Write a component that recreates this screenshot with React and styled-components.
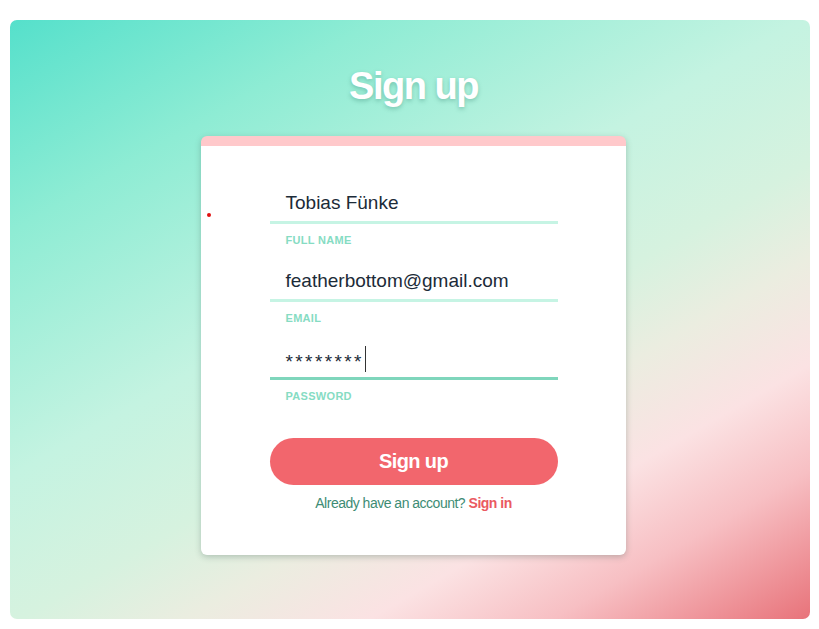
import React from 'react';
import styled, { createGlobalStyle } from 'styled-components';

const GlobalStyle = createGlobalStyle`
  html, body {
    margin: 0;
    padding: 0;
    background: #ffffff;
  }
  body {
    font-family: "Liberation Sans", Arial, sans-serif;
  }
`;

const Page = styled.div`
  padding: 20px 9px 10px 10px;
  height: 629px;
  box-sizing: border-box;
`;

const Backdrop = styled.div`
  position: relative;
  height: 100%;
  border-radius: 7px;
  box-sizing: border-box;
  padding: 43px 0 0 7px;
  display: flex;
  flex-direction: column;
  align-items: center;
  background: linear-gradient(
    150deg,
    #55e0cb 0%,
    #8eecd4 20%,
    #c4f3e1 43%,
    #d6f2df 57%,
    #ebede0 66%,
    #fbe2e3 76%,
    #f7bfc3 86%,
    #e8737a 100%
  );
`;

const Title = styled.h1`
  margin: 0;
  font-family: "Liberation Sans", Arial, sans-serif;
  font-size: 38px;
  font-weight: 700;
  letter-spacing: -1.5px;
  line-height: 46px;
  color: #ffffff;
  text-shadow: 0 2px 4px rgba(40, 120, 100, 0.35);
`;

const Card = styled.div`
  margin-top: 27px;
  width: 425px;
  height: 419px;
  box-sizing: border-box;
  background: #ffffff;
  border-radius: 6px;
  border-top: 10px solid #ffc9cb;
  box-shadow: 0 2px 6px rgba(60, 90, 80, 0.3);
  display: flex;
  flex-direction: column;
  align-items: center;
`;

const Form = styled.form`
  width: 288px;
  margin-top: 38px;
  display: flex;
  flex-direction: column;
`;

const Field = styled.div`
  display: flex;
  flex-direction: column;
  margin-bottom: 15px;
`;

const Value = styled.div`
  height: 37px;
  padding-left: 16px;
  display: flex;
  align-items: center;
  font-size: 19px;
  letter-spacing: ${p => (p.secret ? '2.4px' : '0')};
  color: #1c2b38;
  border-bottom: 3px solid ${p => (p.active ? '#7fd6bc' : '#c6f4e4')};
`;

const Stars = styled.span`
  position: relative;
  top: 3px;
`;

const Caret = styled.span`
  display: inline-block;
  width: 1px;
  height: 26px;
  margin-left: 1px;
  background: #333;
`;

const Label = styled.label`
  margin-top: 10px;
  padding-left: 16px;
  font-size: 11px;
  line-height: 13px;
  font-weight: 700;
  letter-spacing: 0.3px;
  color: #86dcc3;
  text-transform: uppercase;
`;

const Button = styled.button`
  margin-top: 20px;
  height: 47px;
  border: none;
  border-radius: 24px;
  background: #f2666d;
  color: #ffffff;
  font-family: "Liberation Sans", Arial, sans-serif;
  font-size: 20px;
  font-weight: 700;
  letter-spacing: -0.6px;
  cursor: pointer;
`;

const Footer = styled.p`
  margin: 9px 0 0;
  text-align: center;
  font-family: "Liberation Sans", Arial, sans-serif;
  font-size: 14px;
  letter-spacing: -0.5px;
  line-height: 18px;
  color: #3d8c74;
`;

const SignIn = styled.a`
  color: #ea5a62;
  font-weight: 700;
  text-decoration: none;
`;

const Dot = styled.span`
  position: absolute;
  left: 197px;
  top: 193px;
  width: 4px;
  height: 4px;
  border-radius: 50%;
  background: #e01010;
`;

const fields = [
  { value: 'Tobias Fünke', label: 'Full name' },
  { value: 'featherbottom@gmail.com', label: 'Email' },
  { value: '********', label: 'Password', active: true, secret: true },
];

export default function App() {
  return (
    <Page>
      <GlobalStyle />
      <Backdrop>
        <Dot />
        <Title>Sign up</Title>
        <Card>
          <Form onSubmit={e => e.preventDefault()}>
            {fields.map(f => (
              <Field key={f.label}>
                <Value active={f.active} secret={f.secret}>
                  {f.secret ? <Stars>{f.value}</Stars> : f.value}
                  {f.active && <Caret />}
                </Value>
                <Label>{f.label}</Label>
              </Field>
            ))}
            <Button type="submit">Sign up</Button>
            <Footer>
              Already have an account? <SignIn href="#">Sign in</SignIn>
            </Footer>
          </Form>
        </Card>
      </Backdrop>
    </Page>
  );
}
